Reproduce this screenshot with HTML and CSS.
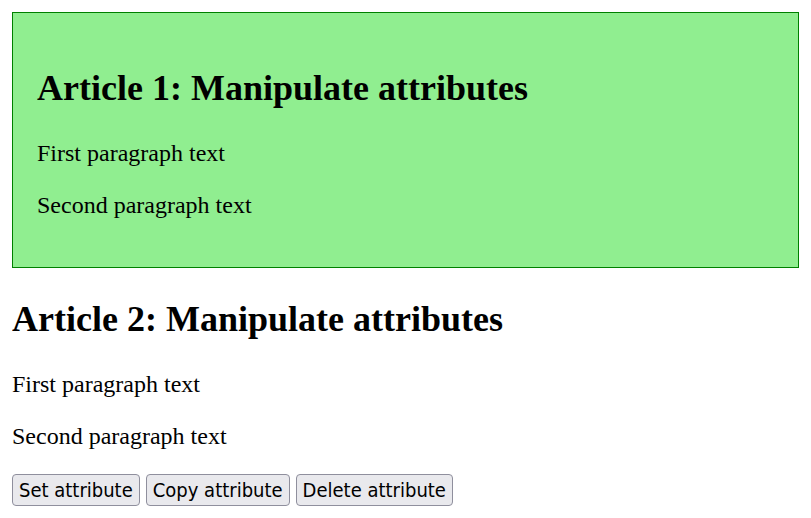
FILE: index.html
```html
<!DOCTYPE html>
<html>
<head>
<meta charset="utf-8">
<link rel="stylesheet" href="styles.css">
</head>
<body>
<article class="article highlighted">
  <h2 class="title">Article 1: Manipulate attributes</h2>
  <p class="text">First paragraph text</p>
  <p class="text">Second paragraph text</p>
</article>
<article class="article">
  <h2 class="title">Article 2: Manipulate attributes</h2>
  <p class="text">First paragraph text</p>
  <p class="text">Second paragraph text</p>
</article>
<div class="actions">
  <button class="btn">Set attribute</button>
  <button class="btn">Copy attribute</button>
  <button class="btn">Delete attribute</button>
</div>
</body>
</html>
```
FILE: styles.css
```css
body {
  margin: 12px;
  font-family: "Liberation Serif", "Times New Roman", serif;
  font-size: 24px;
  color: #000;
  background: #fff;
}
.article {
  display: block;
}
.highlighted {
  background: #90ee90;
  border: 1px solid #008000;
  padding: 24px;
}
.title {
  font-size: 36px;
  line-height: 42px;
  font-weight: bold;
  margin: 30px 0;
}
.text {
  line-height: 28px;
  margin: 24px 0;
}
.actions {
  display: flex;
  gap: 6px;
  margin-top: 24px;
}
.btn {
  font-family: "DejaVu Sans Condensed", "DejaVu Sans", Tahoma, sans-serif;
  font-stretch: condensed;
  font-size: 20px;
  line-height: 24px;
  color: #000;
  background: #e9e9ed;
  border: 1px solid #8f8f9d;
  border-radius: 4px;
  padding: 3px 6px;
}
```
